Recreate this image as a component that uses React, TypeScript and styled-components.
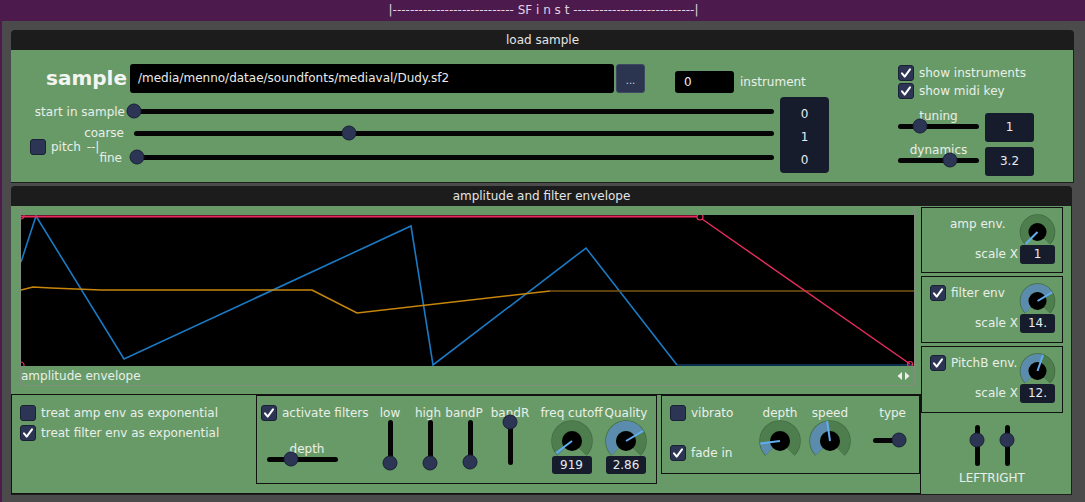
import React from 'react';
import styled, { createGlobalStyle } from 'styled-components';

const GREEN = '#689a68';

const GlobalStyle = createGlobalStyle`
  html, body {
    margin: 0;
    padding: 0;
    background: #4b4b4b;
  }
  body {
    font-family: "DejaVu Sans", "Liberation Sans", sans-serif;
    font-size: 12px;
    color: #e9efe9;
  }
`;

const Window = styled.div`
  width: 1085px;
  height: 502px;
  box-sizing: border-box;
  border-left: 2px solid #4c1a4c;
  background: #4b4b4b;
  overflow: hidden;
`;

const TitleBar = styled.div`
  height: 21px;
  background: #4c1a4c;
  color: #e2d2e2;
  font-size: 12px;
  line-height: 21px;
  text-align: center;
  white-space: pre;
`;

const Main = styled.div`
  padding: 9px 0 0 9px;
  display: flex;
  flex-direction: column;
  gap: 3px;
`;

const Section = styled.section<{ $width: number }>`
  width: ${(p) => p.$width}px;
`;

const SectionHeader = styled.div`
  height: 20px;
  background: #1c1c1c;
  border-radius: 4px 4px 0 0;
  color: #e4e4e4;
  text-align: center;
  line-height: 20px;
`;

const SectionBody = styled.div<{ $height: number }>`
  height: ${(p) => p.$height}px;
  box-sizing: border-box;
  background: ${GREEN};
  border-right: 1px solid #1e1e1e;
  border-bottom: 1px solid #1e1e1e;
  display: flex;
`;

/* ---------- shared controls ---------- */

const Box = styled.span`
  flex: none;
  width: 16px;
  height: 16px;
  box-sizing: border-box;
  background: #2c3554;
  border: 1px solid #1a2036;
  border-radius: 3px;
  display: inline-flex;
  align-items: center;
  justify-content: center;
`;

const CheckRow = styled.label`
  display: flex;
  align-items: center;
  gap: 5px;
  height: 16px;
  white-space: nowrap;
`;

function Check({ checked, children }: { checked?: boolean; children?: React.ReactNode }) {
  return (
    <CheckRow>
      <Box>
        {checked && (
          <svg width="12" height="12" viewBox="0 0 12 12">
            <path d="M2 6.3 L4.7 9.6 L10 2.4" fill="none" stroke="#fff" strokeWidth="2" strokeLinecap="round" strokeLinejoin="round" />
          </svg>
        )}
      </Box>
      {children}
    </CheckRow>
  );
}

const HTrack = styled.div<{ $w: number }>`
  position: relative;
  width: ${(p) => p.$w}px;
  height: 5px;
  background: #050505;
  border-radius: 3px;
`;

const VTrack = styled.div<{ $h: number }>`
  position: relative;
  width: 5px;
  height: ${(p) => p.$h}px;
  background: #050505;
  border-radius: 3px;
`;

const Grabber = styled.span`
  position: absolute;
  width: 15px;
  height: 15px;
  box-sizing: border-box;
  border-radius: 50%;
  background: #2c3554;
  border: 1px solid #1a2036;
  transform: translate(-50%, -50%);
`;

const SliderRow = styled.div<{ $h: number }>`
  height: ${(p) => p.$h}px;
  display: flex;
  align-items: center;
`;

function HSlider({ w, value }: { w: number; value: number }) {
  return (
    <HTrack $w={w}>
      <Grabber style={{ left: `${value * 100}%`, top: '50%' }} />
    </HTrack>
  );
}

const VSlot = styled.div`
  width: 15px;
  display: flex;
  justify-content: center;
`;

function VSlider({ h, value }: { h: number; value: number }) {
  return (
    <VSlot>
      <VTrack $h={h}>
        <Grabber style={{ left: '50%', top: 2 + (1 - value) * (h - 4) }} />
      </VTrack>
    </VSlot>
  );
}

const ValueBox = styled.div<{ $w: number; $h: number }>`
  width: ${(p) => p.$w}px;
  height: ${(p) => p.$h}px;
  flex: none;
  background: #161c2c;
  border-radius: 3px;
  color: #e6ecf2;
  text-align: center;
  line-height: ${(p) => p.$h}px;
  overflow: hidden;
  white-space: nowrap;
`;

const KnobSvg = styled.svg`
  display: block;
  overflow: visible;
`;

function Knob({ r, inner, value, w, h }: { r: number; inner: number; value: number; w: number; h: number }) {
  const cx = w / 2;
  const cy = r + 1;
  const pt = (a: number, rad: number) => [
    cx + rad * Math.cos((a * Math.PI) / 180),
    cy + rad * Math.sin((a * Math.PI) / 180),
  ];
  const arc = (a0: number, a1: number, rad: number) => {
    const [x0, y0] = pt(a0, rad);
    const [x1, y1] = pt(a1, rad);
    const large = a1 - a0 > 180 ? 1 : 0;
    return `M${x0} ${y0} A${rad} ${rad} 0 ${large} 1 ${x1} ${y1}`;
  };
  const mid = (r + inner) / 2;
  const thick = r - inner;
  const end = 135 + 270 * value;
  const [ix, iy] = pt(end, r);
  return (
    <KnobSvg width={w} height={h}>
      <path d={arc(135, 405, mid)} stroke="#3f6a3f" strokeWidth={thick + 1.5} fill="none" />
      <path d={arc(135, 405, mid)} stroke="#4e7d4e" strokeWidth={thick} fill="none" />
      {value > 0.01 && <path d={arc(135, end, mid)} stroke="#5b8cae" strokeWidth={thick} fill="none" />}
      <circle cx={cx} cy={cy} r={inner} fill="#000" />
      <line x1={cx} y1={cy} x2={ix} y2={iy} stroke="#62acf0" strokeWidth="2" />
    </KnobSvg>
  );
}

/* ---------- load sample ---------- */

const LoadBody = styled(SectionBody)`
  padding-top: 14px;
`;

const LeftArea = styled.div`
  width: 819px;
  display: flex;
  flex-direction: column;
`;

const TopRow = styled.div`
  display: flex;
  align-items: flex-end;
  height: 29px;
`;

const SampleTitle = styled.div`
  width: 116px;
  margin-right: 3px;
  text-align: right;
  font-weight: bold;
  font-size: 20px;
  line-height: 29px;
  color: #f2f5f2;
`;

const PathField = styled.div`
  width: 484px;
  height: 29px;
  box-sizing: border-box;
  padding-left: 8px;
  background: #000;
  border-radius: 3px;
  line-height: 29px;
  color: #eaeaea;
`;

const BrowseButton = styled.button`
  width: 29px;
  height: 29px;
  margin-left: 2px;
  padding: 4px 0 0;
  background: #2b3550;
  border: 1px solid #3e4864;
  border-radius: 3px;
  color: #cfd6e0;
  font-family: inherit;
  font-size: 10px;
`;

const InstrumentGroup = styled.div`
  margin-left: 30px;
  display: flex;
  align-items: center;
  gap: 6px;
`;

const SpinField = styled.div`
  width: 59px;
  height: 22px;
  box-sizing: border-box;
  padding-left: 9px;
  background: #000;
  border-radius: 3px;
  line-height: 22px;
  color: #eef;
`;

const SliderBlock = styled.div`
  display: flex;
  height: 76px;
  margin-top: 4px;
`;

const LabelCol = styled.div`
  width: 123px;
  display: grid;
  grid-template-columns: 123px;
  grid-template-rows: 28px 48px;
`;

const StartLabel = styled.div`
  text-align: right;
  padding: 1px 9px 0 0;
  line-height: 28px;
`;

const PitchToggle = styled.div`
  grid-row: 2;
  grid-column: 1;
  justify-self: start;
  align-self: start;
  margin: 14px 0 0 19px;
  word-spacing: 2px;
`;

const SideLabels = styled.div`
  grid-row: 2;
  grid-column: 1;
  justify-self: end;
  align-self: start;
  margin-top: 1px;
  height: 39px;
  padding-right: 10px;
  display: flex;
  flex-direction: column;
  justify-content: space-between;
  align-items: flex-end;
  line-height: 14px;
`;

const FineLabel = styled.span`
  margin-right: 2px;
`;

const TrackCol = styled.div`
  width: 640px;
  display: flex;
  flex-direction: column;
`;

const StackBox = styled.div`
  width: 49px;
  height: 76px;
  margin-left: 6px;
  padding-top: 6px;
  box-sizing: border-box;
  background: #161c2c;
  border-radius: 4px;
  display: flex;
  flex-direction: column;
  align-items: center;
  line-height: 23px;
  color: #e6ecf2;
`;

const RightArea = styled.div`
  margin-left: 68px;
  padding-top: 1px;
  display: flex;
  flex-direction: column;
  gap: 2px;
`;

const TuneRows = styled.div`
  margin-top: 8px;
  display: flex;
  flex-direction: column;
  gap: 1px;
`;

const TuneRow = styled.div`
  display: flex;
  align-items: flex-start;
  height: 33px;
`;

const TuneGroup = styled.div`
  width: 81px;
  display: flex;
  flex-direction: column;
  align-items: center;
  line-height: 14px;
`;

const TuneSlider = styled(SliderRow)`
  margin-top: -4px;
`;

const TuneBox = styled(ValueBox)`
  margin: 4px 0 0 6px;
`;

/* ---------- envelope section ---------- */

const LeftCol = styled.div`
  width: 910px;
  display: flex;
  flex-direction: column;
`;

const EnvelopeWidget = styled.div`
  margin-left: 9px;
  width: 895px;
  height: 180px;
  box-sizing: border-box;
  padding-top: 9px;
  border: 1px solid #7f8f7f;
  border-top: none;
`;

const EnvelopeCanvas = styled.svg`
  display: block;
  background: #000;
`;

const EnvLabelRow = styled.div`
  height: 19px;
  display: flex;
  align-items: center;
  justify-content: space-between;
  padding-right: 3px;
`;

const BottomRow = styled.div`
  margin-top: 8px;
  height: 100px;
  box-sizing: border-box;
  border: 1px solid #111;
  display: flex;
  align-items: flex-start;
`;

const OptionsPane = styled.div`
  width: 244px;
  box-sizing: border-box;
  padding: 10px 8px;
  display: flex;
  flex-direction: column;
  gap: 4px;
`;

const Panel = styled.div<{ $w: number; $h: number; $ml?: number }>`
  width: ${(p) => p.$w}px;
  height: ${(p) => p.$h}px;
  margin-left: ${(p) => p.$ml ?? 0}px;
  box-sizing: border-box;
  border: 1px solid #111;
  display: flex;
  align-items: flex-start;
`;

const FilterToggleCol = styled.div`
  width: 113px;
  box-sizing: border-box;
  padding: 9px 0 0 4px;
  display: flex;
  flex-direction: column;
`;

const DepthGroup = styled.div`
  margin: 21px 0 0 6px;
  width: 71px;
  display: flex;
  flex-direction: column;
  line-height: 14px;
`;

const DepthLabel = styled.div`
  text-align: center;
  padding-left: 9px;
`;

const SliderColumns = styled.div`
  display: flex;
  padding-top: 10px;
`;

const SliderColumn = styled.div`
  width: 40px;
  display: flex;
  flex-direction: column;
  align-items: center;
  line-height: 14px;
  white-space: nowrap;
`;

const SliderLabel = styled.span<{ $shift?: number }>`
  position: relative;
  left: ${(p) => p.$shift ?? 0}px;
`;

const KnobColumn = styled.div<{ $w: number; $ml?: number }>`
  width: ${(p) => p.$w}px;
  margin-left: ${(p) => p.$ml ?? 0}px;
  padding-top: 10px;
  display: flex;
  flex-direction: column;
  align-items: center;
  line-height: 14px;
  white-space: nowrap;
`;

const VibratoToggles = styled.div`
  width: 96px;
  box-sizing: border-box;
  padding: 9px 0 0 8px;
  display: flex;
  flex-direction: column;
  gap: 24px;
`;

const TypeColumn = styled.div`
  width: 33px;
  margin-left: 21px;
  padding-top: 10px;
  display: flex;
  flex-direction: column;
  line-height: 14px;
`;

const TypeLabel = styled.div`
  text-align: right;
`;

const TypeSlider = styled(SliderRow)`
  margin-top: 13px;
`;

const RightCol = styled.div`
  width: 142px;
  padding-top: 1px;
  display: flex;
  flex-direction: column;
  gap: 3px;
`;

const EnvPanel = styled.div<{ $h: number }>`
  height: ${(p) => p.$h}px;
  box-sizing: border-box;
  border: 1px solid #111;
  padding: 6px 7px 0 8px;
  display: grid;
  grid-template-columns: 1fr 35px;
  grid-template-rows: 31px 19px;
  column-gap: 2px;
`;

const EnvTitle = styled.div`
  margin-top: 2px;
  height: 16px;
  display: flex;
  align-items: center;
  white-space: nowrap;
`;

const TitleIndent = styled.span`
  padding-left: 20px;
`;

const ScaleLabel = styled.div`
  text-align: right;
  line-height: 19px;
`;

const StereoGroup = styled.div`
  margin-top: 9px;
  display: flex;
  flex-direction: column;
  align-items: center;
`;

const StereoPair = styled.div`
  display: flex;
  gap: 15px;
`;

const StereoLabel = styled.div`
  margin-top: 5px;
  line-height: 14px;
`;

function Envelope() {
  return (
    <EnvelopeCanvas width={893} height={151}>
      <polyline points="0,47 15,1 103,144 390,11 412,150 565,33 656,150" fill="none" stroke="#1a7ac4" strokeWidth="1.6" />
      <polyline points="656,150 893,150" fill="none" stroke="#0f3d6a" strokeWidth="1.6" />
      <polyline points="0,75 12,72 30,73 80,75 291,75 336,98 529,76" fill="none" stroke="#c8860c" strokeWidth="1.6" />
      <polyline points="529,76 893,76" fill="none" stroke="#7a5410" strokeWidth="1.6" />
      <polyline points="0,1.5 676,1.5" fill="none" stroke="#ea2d5e" strokeWidth="2" />
      <polyline points="681,4 889,149" fill="none" stroke="#ea2d5e" strokeWidth="1.4" />
      <circle cx="679" cy="2" r="3" fill="none" stroke="#ea2d5e" strokeWidth="1.2" />
      <circle cx="0" cy="1" r="3" fill="none" stroke="#ea2d5e" strokeWidth="1.2" />
      <circle cx="0" cy="150" r="3" fill="none" stroke="#ea2d5e" strokeWidth="1.2" />
      <circle cx="889" cy="149" r="2.5" fill="none" stroke="#ea2d5e" strokeWidth="1.2" />
    </EnvelopeCanvas>
  );
}

function ScrollArrows() {
  return (
    <svg width="15" height="10" viewBox="0 0 15 10">
      <path d="M6 1 L1.5 5 L6 9 Z" fill="#f0f0f0" />
      <path d="M9 1 L13.5 5 L9 9 Z" fill="#f0f0f0" />
    </svg>
  );
}

const DASHES = '-'.repeat(28);

export default function App() {
  return (
    <>
      <GlobalStyle />
      <Window>
        <TitleBar>{`|${DASHES} SF i n s t ${DASHES}|`}</TitleBar>
        <Main>
          <Section $width={1063}>
            <SectionHeader>load sample</SectionHeader>
            <LoadBody $height={133}>
              <LeftArea>
                <TopRow>
                  <SampleTitle>sample</SampleTitle>
                  <PathField>/media/menno/datae/soundfonts/mediaval/Dudy.sf2</PathField>
                  <BrowseButton>...</BrowseButton>
                  <InstrumentGroup>
                    <SpinField>0</SpinField>
                    <span>instrument</span>
                  </InstrumentGroup>
                </TopRow>
                <SliderBlock>
                  <LabelCol>
                    <StartLabel>start in sample</StartLabel>
                    <PitchToggle>
                      <Check>pitch --|</Check>
                    </PitchToggle>
                    <SideLabels>
                      <span>coarse</span>
                      <FineLabel>fine</FineLabel>
                    </SideLabels>
                  </LabelCol>
                  <TrackCol>
                    <SliderRow $h={28}>
                      <HSlider w={640} value={0} />
                    </SliderRow>
                    <SliderRow $h={16}>
                      <HSlider w={640} value={0.336} />
                    </SliderRow>
                    <SliderRow $h={32}>
                      <HSlider w={640} value={0.005} />
                    </SliderRow>
                  </TrackCol>
                  <StackBox>
                    <span>0</span>
                    <span>1</span>
                    <span>0</span>
                  </StackBox>
                </SliderBlock>
              </LeftArea>
              <RightArea>
                <Check checked>show instruments</Check>
                <Check checked>show midi key</Check>
                <TuneRows>
                  <TuneRow>
                    <TuneGroup>
                      <span>tuning</span>
                      <TuneSlider $h={14}>
                        <HSlider w={81} value={0.27} />
                      </TuneSlider>
                    </TuneGroup>
                    <TuneBox $w={49} $h={29}>1</TuneBox>
                  </TuneRow>
                  <TuneRow>
                    <TuneGroup>
                      <span>dynamics</span>
                      <TuneSlider $h={14}>
                        <HSlider w={81} value={0.64} />
                      </TuneSlider>
                    </TuneGroup>
                    <TuneBox $w={49} $h={29}>3.2</TuneBox>
                  </TuneRow>
                </TuneRows>
              </RightArea>
            </LoadBody>
          </Section>

          <Section $width={1061}>
            <SectionHeader>amplitude and filter envelope</SectionHeader>
            <SectionBody $height={289}>
              <LeftCol>
                <EnvelopeWidget>
                  <Envelope />
                  <EnvLabelRow>
                    <span>amplitude envelope</span>
                    <ScrollArrows />
                  </EnvLabelRow>
                </EnvelopeWidget>
                <BottomRow>
                  <OptionsPane>
                    <Check>treat amp env as exponential</Check>
                    <Check checked>treat filter env as exponential</Check>
                  </OptionsPane>
                  <Panel $w={401} $h={89}>
                    <FilterToggleCol>
                      <Check checked>activate filters</Check>
                      <DepthGroup>
                        <DepthLabel>depth</DepthLabel>
                        <TuneSlider $h={14}>
                          <HSlider w={71} value={0.34} />
                        </TuneSlider>
                      </DepthGroup>
                    </FilterToggleCol>
                    <SliderColumns>
                      <SliderColumn>
                        <SliderLabel>low</SliderLabel>
                        <VSlider h={45} value={0} />
                      </SliderColumn>
                      <SliderColumn>
                        <SliderLabel $shift={-2}>high</SliderLabel>
                        <VSlider h={45} value={0} />
                      </SliderColumn>
                      <SliderColumn>
                        <SliderLabel $shift={-6}>bandP</SliderLabel>
                        <VSlider h={45} value={0.03} />
                      </SliderColumn>
                      <SliderColumn>
                        <SliderLabel>bandR</SliderLabel>
                        <VSlider h={45} value={1} />
                      </SliderColumn>
                    </SliderColumns>
                    <KnobColumn $w={63} $ml={10}>
                      <span>freq cutoff</span>
                      <Knob r={20} inner={10} value={0.03} w={44} h={36} />
                      <ValueBox $w={40} $h={18}>919</ValueBox>
                    </KnobColumn>
                    <KnobColumn $w={44} $ml={1}>
                      <span>Quality</span>
                      <Knob r={20} inner={10} value={0.72} w={44} h={36} />
                      <ValueBox $w={40} $h={18}>2.86</ValueBox>
                    </KnobColumn>
                  </Panel>
                  <Panel $w={259} $h={79} $ml={4}>
                    <VibratoToggles>
                      <Check>vibrato</Check>
                      <Check checked>fade in</Check>
                    </VibratoToggles>
                    <KnobColumn $w={44}>
                      <span>depth</span>
                      <Knob r={20} inner={10} value={0.14} w={44} h={36} />
                    </KnobColumn>
                    <KnobColumn $w={44} $ml={6}>
                      <span>speed</span>
                      <Knob r={20} inner={10} value={0.47} w={44} h={36} />
                    </KnobColumn>
                    <TypeColumn>
                      <TypeLabel>type</TypeLabel>
                      <TypeSlider $h={14}>
                        <HSlider w={33} value={0.8} />
                      </TypeSlider>
                    </TypeColumn>
                  </Panel>
                </BottomRow>
              </LeftCol>
              <RightCol>
                <EnvPanel $h={66}>
                  <EnvTitle>
                    <TitleIndent>amp env.</TitleIndent>
                  </EnvTitle>
                  <Knob r={17} inner={9} value={0} w={35} h={31} />
                  <ScaleLabel>scale X</ScaleLabel>
                  <ValueBox $w={35} $h={19}>1</ValueBox>
                </EnvPanel>
                <EnvPanel $h={67}>
                  <EnvTitle>
                    <Check checked>filter env</Check>
                  </EnvTitle>
                  <Knob r={17} inner={9} value={0.72} w={35} h={31} />
                  <ScaleLabel>scale X</ScaleLabel>
                  <ValueBox $w={35} $h={19}>14.</ValueBox>
                </EnvPanel>
                <EnvPanel $h={67}>
                  <EnvTitle>
                    <Check checked>PitchB env.</Check>
                  </EnvTitle>
                  <Knob r={17} inner={9} value={0.57} w={35} h={31} />
                  <ScaleLabel>scale X</ScaleLabel>
                  <ValueBox $w={35} $h={19}>12.</ValueBox>
                </EnvPanel>
                <StereoGroup>
                  <StereoPair>
                    <VSlider h={41} value={0.66} />
                    <VSlider h={41} value={0.66} />
                  </StereoPair>
                  <StereoLabel>LEFTRIGHT</StereoLabel>
                </StereoGroup>
              </RightCol>
            </SectionBody>
          </Section>
        </Main>
      </Window>
    </>
  );
}
